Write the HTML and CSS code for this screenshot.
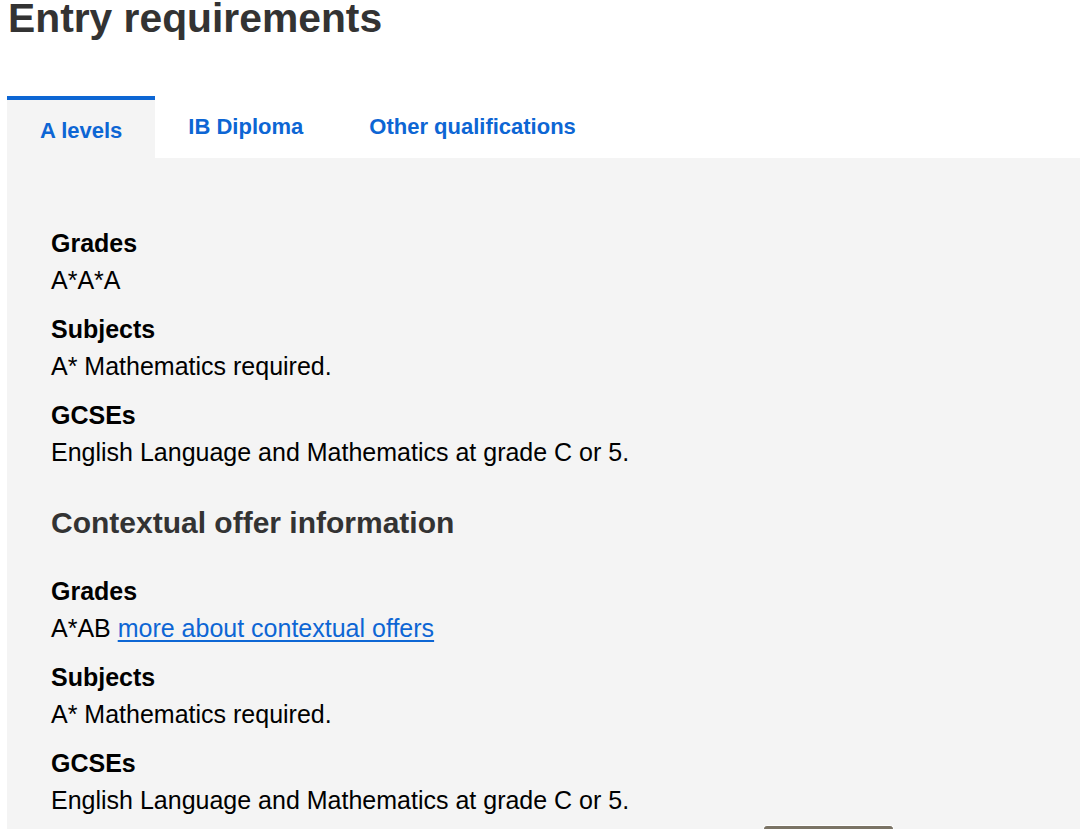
FILE: index.html
```html
<!DOCTYPE html>
<html lang="en">
<head>
<meta charset="utf-8">
<title>Entry requirements</title>
<link rel="stylesheet" href="styles.css">
</head>
<body>
<main class="page">
  <h1 class="title">Entry requirements</h1>
  <div class="tabs">
    <a class="tab tab-active" href="#">A levels</a>
    <a class="tab" href="#">IB Diploma</a>
    <a class="tab" href="#">Other qualifications</a>
  </div>
  <section class="panel">
    <dl class="reqs">
      <dt>Grades</dt>
      <dd>A*A*A</dd>
      <dt>Subjects</dt>
      <dd>A* Mathematics required.</dd>
      <dt>GCSEs</dt>
      <dd>English Language and Mathematics at grade C or 5.</dd>
    </dl>
    <h2 class="subhead">Contextual offer information</h2>
    <dl class="reqs">
      <dt>Grades</dt>
      <dd>A*AB <a class="link" href="#">more about contextual offers</a></dd>
      <dt>Subjects</dt>
      <dd>A* Mathematics required.</dd>
      <dt>GCSEs</dt>
      <dd class="last">English Language and Mathematics at grade C or 5.</dd>
    </dl>
  </section>
  <div class="peek"></div>
</main>
</body>
</html>
```

FILE: styles.css
```css
* { box-sizing: border-box; }
html, body { margin: 0; padding: 0; background: #fff; }
body {
  font-family: "Liberation Sans", Arial, Helvetica, sans-serif;
  color: #111;
  overflow: hidden;
  height: 829px;
}
.page {
  margin-left: 7px;
  position: relative;
  height: 829px;
  overflow: hidden;
}
.title {
  margin: 0 0 0 1px;
  font-size: 40.8px;
  line-height: 36px;
  font-weight: 700;
  color: #333;
  height: 96px;
  padding-top: 0;
}
.tabs {
  display: flex;
  align-items: flex-start;
  height: 62px;
}
.tab {
  display: block;
  padding: 19px 33px 15px;
  font-size: 22px;
  line-height: 24px;
  font-weight: 700;
  color: #0d66d4;
  text-decoration: none;
}
.tab-active {
  border-top: 4px solid #0d66d4;
  background: #f4f4f4;
}
.panel {
  background: #f4f4f4;
  padding: 67px 44px 0;
  height: 671px;
}
.reqs { margin: 0; }
.reqs dt {
  font-weight: 700;
  font-size: 25px;
  line-height: 37px;
  color: #000;
}
.reqs dd {
  margin: 0 0 12px;
  font-size: 25px;
  line-height: 37px;
  color: #000;
}
.reqs dd.last { margin-bottom: 0; }
.subhead {
  margin: 34px 0 32px;
  font-size: 30px;
  line-height: 36px;
  font-weight: 700;
  color: #333;
}
.link {
  color: #0d66d4;
  text-decoration: underline;
  text-underline-offset: 3px;
}
.peek {
  position: absolute;
  left: 756px;
  top: 825px;
  width: 131px;
  height: 4px;
  border: 1px solid #fff;
  border-bottom: 0;
  border-radius: 4px 4px 0 0;
  background: #7a7365;
}
```
